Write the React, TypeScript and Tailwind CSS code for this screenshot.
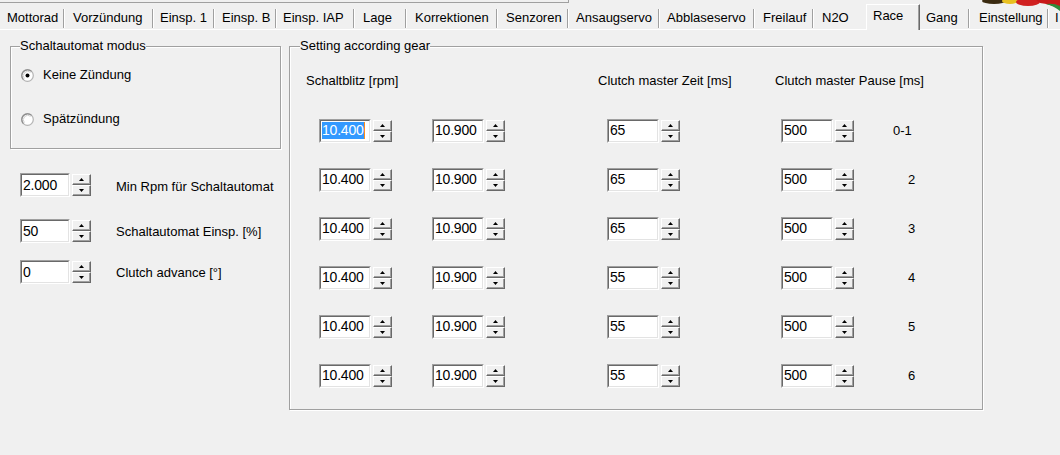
import React from 'react'
import clsx from 'clsx'

const tabs = [
  { label: 'Mottorad', cls: 'w-[63px] pl-[7px]' },
  { label: 'Vorzündung', cls: 'w-[87px] pl-[8px]' },
  { label: 'Einsp. 1', cls: 'w-[59px] pl-[6px]' },
  { label: 'Einsp. B', cls: 'w-[60px] pl-[7px]' },
  { label: 'Einsp. IAP', cls: 'w-[76px] pl-[6px]' },
  { label: 'Lage', cls: 'w-[50px] pl-[8px]' },
  { label: 'Korrektionen', cls: 'w-[89px] pl-[8px]' },
  { label: 'Senzoren', cls: 'w-[69px] pl-[8px]' },
  { label: 'Ansaugservo', cls: 'w-[89px] pl-[7px]' },
  { label: 'Abblaseservo', cls: 'w-[93px] pl-[7px]' },
  { label: 'Freilauf', cls: 'w-[57px] pl-[8px]' },
  { label: 'N2O', cls: 'w-[52px] pl-[8px]', noSep: true },
  { label: 'Race', active: true },
  { label: 'Gang', cls: 'w-[48px] pl-[6px]' },
  { label: 'Einstellung', cls: 'w-[77px] pl-[9px]' },
  { label: 'I', cls: 'w-[11px] pl-[6px]', noSep: true },
]

const gears = [
  { a: '10.400', b: '10.900', zeit: '65', pause: '500', label: '0-1' },
  { a: '10.400', b: '10.900', zeit: '65', pause: '500', label: '2' },
  { a: '10.400', b: '10.900', zeit: '65', pause: '500', label: '3' },
  { a: '10.400', b: '10.900', zeit: '55', pause: '500', label: '4' },
  { a: '10.400', b: '10.900', zeit: '55', pause: '500', label: '5' },
  { a: '10.400', b: '10.900', zeit: '55', pause: '500', label: '6' },
]

const Arrow = ({ up }: { up?: boolean }) => (
  <svg width="5" height="3" viewBox="0 0 5 3">
    <path d={up ? 'M2.5 0 L5 3 L0 3 Z' : 'M0 0 L5 0 L2.5 3 Z'} fill="#000" />
  </svg>
)

const SpinButton = ({ up }: { up?: boolean }) => (
  <div className="flex flex-1 items-center justify-center border border-t-white border-l-white border-b-[#696969] border-r-[#696969] bg-[#f0f0f0] shadow-[inset_-1px_-1px_0_#a0a0a0]">
    <Arrow up={up} />
  </div>
)

const SpinEdit = ({ value, width = 'w-[52px]', selected }: { value: string; width?: string; selected?: boolean }) => (
  <div className="flex items-center gap-[2px]">
    <div className={clsx('h-[24px] border border-t-[#a0a0a0] border-l-[#a0a0a0] border-b-white border-r-white', width)}>
      <div className="flex h-full items-center border border-t-[#696969] border-l-[#696969] border-b-[#e3e3e3] border-r-[#e3e3e3] bg-white pl-[1px] text-[14px] tracking-[-0.2px]">
        {selected ? (
          <>
            <span className="bg-[#3399ff] leading-[17px] text-white">{value}</span>
            <span className="h-[17px] w-[1px] bg-[#ff8c1a]" />
          </>
        ) : (
          <span className="leading-[17px]">{value}</span>
        )}
      </div>
    </div>
    <div className="flex h-[22px] w-[19px] flex-col">
      <SpinButton up />
      <SpinButton />
    </div>
  </div>
)

const Radio = ({ checked, label }: { checked?: boolean; label: string }) => (
  <div className="flex h-[16px] items-center">
    <svg width="13" height="13" viewBox="0 0 13 13" className="ml-[10px]">
      <circle cx="6.5" cy="6.5" r="5.8" fill="#fff" stroke="#b4b4b4" strokeWidth="1.2" />
      <path d="M2.4 10.6 A5.8 5.8 0 0 1 10.6 2.4" fill="none" stroke="#8c8c8c" strokeWidth="1.2" />
      <path d="M3.4 9.6 A4.4 4.4 0 0 1 9.6 3.4" fill="none" stroke="#d0d0d0" strokeWidth="1" />
      {checked && <circle cx="6.5" cy="6.5" r="2" fill="#000" />}
    </svg>
    <span className="ml-[9px] leading-[16px]">{label}</span>
  </div>
)

export default function App() {
  return (
    <div className="relative h-[455px] w-[1060px] overflow-hidden bg-[#f0f0f0] text-[13px] text-black [font-family:'Liberation_Sans',Arial,sans-serif]">
      {/* frame edge of the control above */}
      <div className="h-[4px]">
        <div className="h-[3px] w-[569px] border-b border-r border-[#a0a0a0]" />
      </div>

      <svg className="absolute right-0 top-0" width="80" height="12" viewBox="0 0 80 12">
        <ellipse cx="14" cy="1" rx="12" ry="3" fill="#3a2a10" />
        <ellipse cx="30" cy="1" rx="8" ry="3" fill="#e8c020" />
        <ellipse cx="48" cy="2" rx="12" ry="4" fill="#d02020" />
        <path d="M56 0 L80 0 L80 9 Q70 4 60 3 Z" fill="#c81818" />
        <path d="M66 4 Q74 6 80 11 L80 6 Q74 3 66 4 Z" fill="#2e8b3a" />
      </svg>

      {/* tab strip */}
      <div className="flex h-[26px] whitespace-nowrap">
        {tabs.map((t) =>
          t.active ? (
            <div
              key={t.label}
              className="flex h-[26px] w-[54px] shrink-0 border-l border-t border-r border-l-white border-t-white border-r-[#696969] shadow-[inset_-1px_0_0_#a0a0a0]"
            >
              <span className="mt-[3px] pl-[6px] leading-[16px]">{t.label}</span>
            </div>
          ) : (
            <div key={t.label} className="flex h-[26px] shrink-0 border-b border-white">
              <span className={clsx('mt-[6px] overflow-hidden leading-[16px]', t.cls)}>{t.label}</span>
              {!t.noSep && <span className="mt-[5px] h-[19px] w-[2px] border-l border-r border-l-[#a0a0a0] border-r-white" />}
            </div>
          )
        )}
      </div>

      <div className="flex gap-[8px] pl-[10px] pt-[8px]">
        {/* left column */}
        <div className="w-[271px]">
          <fieldset className="h-[111px] w-[271px] border border-[#a0a0a0] shadow-[inset_1px_1px_0_#fff,1px_1px_0_#fff]">
            <legend className="ml-[9px] bg-[#f0f0f0] leading-[16px]">Schaltautomat modus</legend>
            <div className="mt-[13px]">
              <Radio checked label="Keine Zündung" />
            </div>
            <div className="mt-[28px]">
              <Radio label="Spätzündung" />
            </div>
          </fieldset>

          <div className="ml-[10px] mt-[24px] flex items-center">
            <SpinEdit value="2.000" width="w-[50px]" />
            <span className="ml-[25px] pt-[3px]">Min Rpm für Schaltautomat</span>
          </div>
          <div className="ml-[10px] mt-[22px] flex items-center">
            <SpinEdit value="50" width="w-[50px]" />
            <span className="ml-[25px] pt-[1px]">Schaltautomat Einsp. [%]</span>
          </div>
          <div className="ml-[10px] mt-[17px] flex items-center">
            <SpinEdit value="0" width="w-[50px]" />
            <span className="ml-[25px] pt-[1px]">Clutch advance [°]</span>
          </div>
        </div>

        {/* gear settings */}
        <fieldset className="h-[372px] w-[694px] border border-[#a0a0a0] shadow-[inset_1px_1px_0_#fff,1px_1px_0_#fff]">
          <legend className="ml-[10px] bg-[#f0f0f0] leading-[16px]">Setting according gear</legend>
          <div className="mt-[19px] flex pl-[16px] leading-[16px]">
            <span className="w-[292px]">Schaltblitz [rpm]</span>
            <span className="w-[177px]">Clutch master Zeit [ms]</span>
            <span>Clutch master Pause [ms]</span>
          </div>
          <div className="mt-[17px]">
            {gears.map((g, i) => (
              <div key={g.label} className="flex h-[49px] items-center pl-[29px]">
                <div className="w-[113px]">
                  <SpinEdit value={g.a} selected={i === 0} />
                </div>
                <div className="w-[175px]">
                  <SpinEdit value={g.b} />
                </div>
                <div className="w-[174px]">
                  <SpinEdit value={g.zeit} />
                </div>
                <div className="w-[112px]">
                  <SpinEdit value={g.pause} />
                </div>
                <span className={clsx('leading-[16px]', i === 0 ? 'pl-0' : 'pl-[15px]')}>{g.label}</span>
              </div>
            ))}
          </div>
        </fieldset>
      </div>
    </div>
  )
}
